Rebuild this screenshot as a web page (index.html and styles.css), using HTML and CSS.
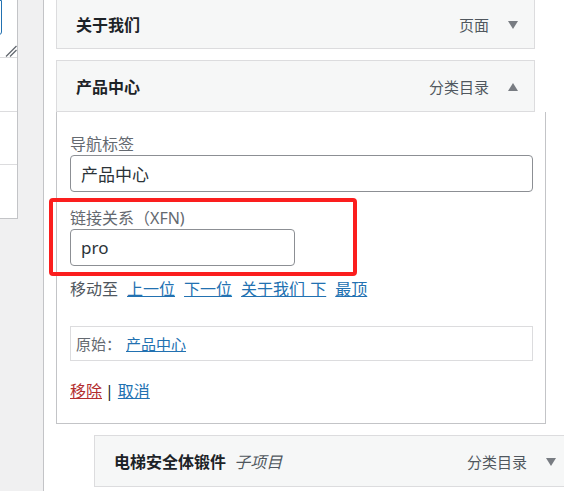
FILE: index.html
```html
<!DOCTYPE html>
<html lang="zh-CN">
<head>
<meta charset="utf-8">
<title>菜单项</title>
<link rel="stylesheet" href="styles.css">
</head>
<body>
<div class="page">
  <aside class="left">
    <div class="side-box">
      <div class="sb-top">
        <div class="ta"></div>
        <svg class="grip" width="12" height="12" viewBox="0 0 12 12"><path d="M1 11.5 L11.5 1 M5 11.5 L11.5 5" stroke="#646970" stroke-width="1.3" fill="none"/></svg>
      </div>
      <div class="sb-row r1"></div>
      <div class="sb-row r2"></div>
      <div class="sb-row r3"></div>
    </div>
  </aside>
  <main class="menu">
    <div class="item item-first">
      <div class="handle">
        <span class="title">关于我们</span>
        <span class="type">页面</span>
        <svg class="arrow" width="10" height="8" viewBox="0 0 10 8"><polygon points="0,0 10,0 5,8" fill="#787c82"/></svg>
      </div>
    </div>
    <div class="item item-open">
      <div class="handle">
        <span class="title">产品中心</span>
        <span class="type">分类目录</span>
        <svg class="arrow" width="10" height="8" viewBox="0 0 10 8"><polygon points="0,8 10,8 5,0" fill="#787c82"/></svg>
      </div>
      <div class="settings">
        <label class="field-label">导航标签</label>
        <div class="input wide">产品中心</div>
        <label class="field-label second">链接关系（XFN)</label>
        <div class="input narrow">pro</div>
        <div class="move">
          <span class="move-label">移动至</span>
          <a href="#">上一位</a>
          <a href="#">下一位</a>
          <a href="#" class="spaced">关于我们 下</a>
          <a href="#">最顶</a>
        </div>
        <div class="original">原始：<a href="#">产品中心</a></div>
        <div class="actions"><a href="#" class="remove">移除</a><span class="sep">|</span><a href="#">取消</a></div>
      </div>
    </div>
    <div class="item depth-1">
      <div class="handle">
        <span class="title">电梯安全体锻件 <em class="sub">子项目</em></span>
        <span class="type">分类目录</span>
        <svg class="arrow" width="10" height="8" viewBox="0 0 10 8"><polygon points="0,0 10,0 5,8" fill="#787c82"/></svg>
      </div>
    </div>
    <div class="annot"></div>
  </main>
</div>
</body>
</html>
```
FILE: styles.css
```css
html, body {
  margin: 0;
  padding: 0;
  background: #fff;
}
body {
  width: 564px;
  height: 491px;
  overflow: hidden;
  font-family: "Noto Sans", "Noto Sans CJK SC", sans-serif;
  color: #1d2327;
}
.page {
  display: flex;
  height: 491px;
}
.left {
  width: 44px;
  flex-shrink: 0;
  box-sizing: border-box;
  background: #f0f0f1;
  border-right: 1px solid #c3c4c7;
}
.side-box {
  width: 18px;
  height: 219px;
  box-sizing: border-box;
  background: #fff;
  border-right: 1px solid #c3c4c7;
  border-bottom: 1px solid #c3c4c7;
  overflow: hidden;
}
.sb-top {
  height: 57px;
}
.ta {
  width: 22px;
  height: 35px;
  margin-left: -20px;
  box-sizing: border-box;
  border: 1px solid #2271b1;
  border-radius: 0 0 3px 0;
}
.grip {
  display: block;
  margin: 10px 0 0 5px;
}
.sb-row {
  border-top: 1px solid #dcdcde;
}
.r1 { height: 53px; }
.r2 { height: 52px; }
.r3 { height: 54px; }

.menu {
  flex: 1;
  position: relative;
  padding-left: 12px;
  overflow: hidden;
  background: #fff;
}
.item { margin-top: 11px; }
.item-first { margin-top: -3px; }
.depth-1 { margin-left: 38px; }

.handle {
  width: 479px;
  height: 52px;
  box-sizing: border-box;
  border: 1px solid #dcdcde;
  background: #f6f7f7;
  display: flex;
  align-items: center;
  padding: 1px 16px 0 19px;
}
.item-first .handle { padding-top: 4px; }
.title {
  flex: 1;
  font-size: 16px;
  line-height: 20px;
  font-weight: 700;
  white-space: nowrap;
  color: #1d2327;
}
.sub {
  font-weight: 400;
  font-style: italic;
  color: #50575e;
  margin-left: 4px;
}
.type {
  font-size: 15px;
  line-height: 20px;
  color: #50575e;
}
.arrow {
  display: block;
  margin-left: 19px;
}

.settings {
  width: 490px;
  box-sizing: border-box;
  border: 1px solid #c3c4c7;
  border-top: none;
  padding: 22px 12px 22px 13px;
}
.field-label {
  display: block;
  font-size: 16px;
  line-height: 20px;
  color: #646970;
}
.field-label.second { margin-top: 16px; }
.input {
  margin-top: 1px;
  height: 37px;
  box-sizing: border-box;
  border: 1px solid #8c8f94;
  border-radius: 4px;
  padding: 0 10px;
  display: flex;
  align-items: center;
  font-size: 17px;
  color: #2c3338;
  background: #fff;
}
.input.narrow { width: 225px; }
.move {
  margin-top: 13px;
  display: flex;
  gap: 9px;
  font-size: 16px;
  line-height: 20px;
  color: #50575e;
}
a {
  color: #2271b1;
  text-decoration: underline;
}
.spaced { word-spacing: 1px; }
.original {
  margin-top: 27px;
  height: 35px;
  box-sizing: border-box;
  border: 1px solid #dcdcde;
  padding-left: 5px;
  display: flex;
  align-items: center;
  font-size: 15px;
  color: #646970;
}
.original a { margin-left: 5px; }
.actions {
  margin-top: 20px;
  font-size: 16px;
  line-height: 20px;
  color: #50575e;
}
.actions .remove { color: #b32d2e; }
.sep {
  color: #1d2327;
  margin: 0 4px 0 3px;
}

.annot {
  position: absolute;
  left: 5px;
  top: 198px;
  width: 308px;
  height: 78px;
  box-sizing: border-box;
  border: 4px solid #fb1e1e;
  border-radius: 4px;
  pointer-events: none;
}
```
